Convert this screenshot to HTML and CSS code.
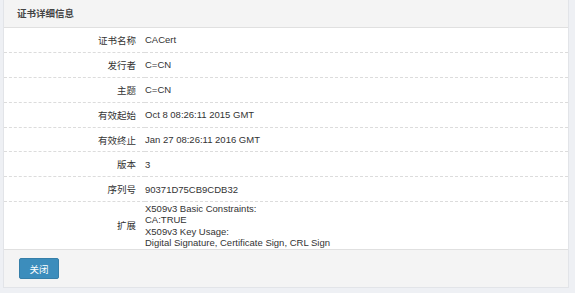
FILE: index.html
```html
<!DOCTYPE html>
<html lang="zh-CN">
<head>
  <meta charset="UTF-8">
  <meta name="viewport" content="width=device-width, initial-scale=1.0">
  <title>证书详细信息</title>
  <link rel="stylesheet" href="styles.css">
</head>
<body>

  <div class="panel">
    <div class="panel-heading">证书详细信息</div>

    <table class="detail">
      <tbody>
        <tr>
          <th>证书名称</th>
          <td>CACert</td>
        </tr>
        <tr>
          <th>发行者</th>
          <td>C=CN</td>
        </tr>
        <tr>
          <th>主题</th>
          <td>C=CN</td>
        </tr>
        <tr>
          <th>有效起始</th>
          <td>Oct 8 08:26:11 2015 GMT</td>
        </tr>
        <tr>
          <th>有效终止</th>
          <td>Jan 27 08:26:11 2016 GMT</td>
        </tr>
        <tr>
          <th>版本</th>
          <td>3</td>
        </tr>
        <tr>
          <th>序列号</th>
          <td>90371D75CB9CDB32</td>
        </tr>
        <tr class="multi">
          <th>扩展</th>
          <td>
            X509v3 Basic Constraints:<br>
            CA:TRUE<br>
            X509v3 Key Usage:<br>
            Digital Signature, Certificate Sign, CRL Sign
          </td>
        </tr>
      </tbody>
    </table>

    <div class="panel-footer">
      <button class="btn">关闭</button>
    </div>
  </div>

</body>
</html>
```

FILE: styles.css
```css
body {
  background-color: #eef0f4;
  font-family: Arial, "Liberation Sans", "Noto Sans CJK SC", sans-serif;
  font-size: 9.5px;
  color: #333;
  margin: 0;
  padding: 0 6px 0 3px;
}

.panel {
  background-color: #fff;
  border: 1px solid #e2e4e8;
  border-top: none;
}

.panel-heading {
  background-color: #f4f4f4;
  border-bottom: 1px solid #e0e0e0;
  height: 27px;
  line-height: 27px;
  padding-left: 13px;
  font-weight: bold;
  color: #444;
}

.detail {
  width: 100%;
  border-collapse: collapse;
}

.detail th,
.detail td {
  height: 23.9px;
  padding: 0;
  border-bottom: 1px dashed #dcdcdc;
  vertical-align: middle;
}

.detail th {
  width: 132px;
  padding-right: 9px;
  text-align: right;
  font-weight: normal;
}

.detail td {
  text-align: left;
}

.detail .multi th,
.detail .multi td {
  height: auto;
  border-bottom: 1px solid #e0e0e0;
  padding-top: 1px;
  padding-bottom: 1px;
  line-height: 11.2px;
}

.panel-footer {
  background-color: #f4f4f4;
  height: 37px;
  padding: 8px 0 0 15px;
  box-sizing: border-box;
}

.btn {
  background-color: #3c8dbc;
  border: 1px solid #367fa9;
  border-radius: 2px;
  color: #fff;
  font-family: inherit;
  font-size: 9.5px;
  width: 40px;
  height: 21px;
  padding: 0;
  cursor: pointer;
}
```
